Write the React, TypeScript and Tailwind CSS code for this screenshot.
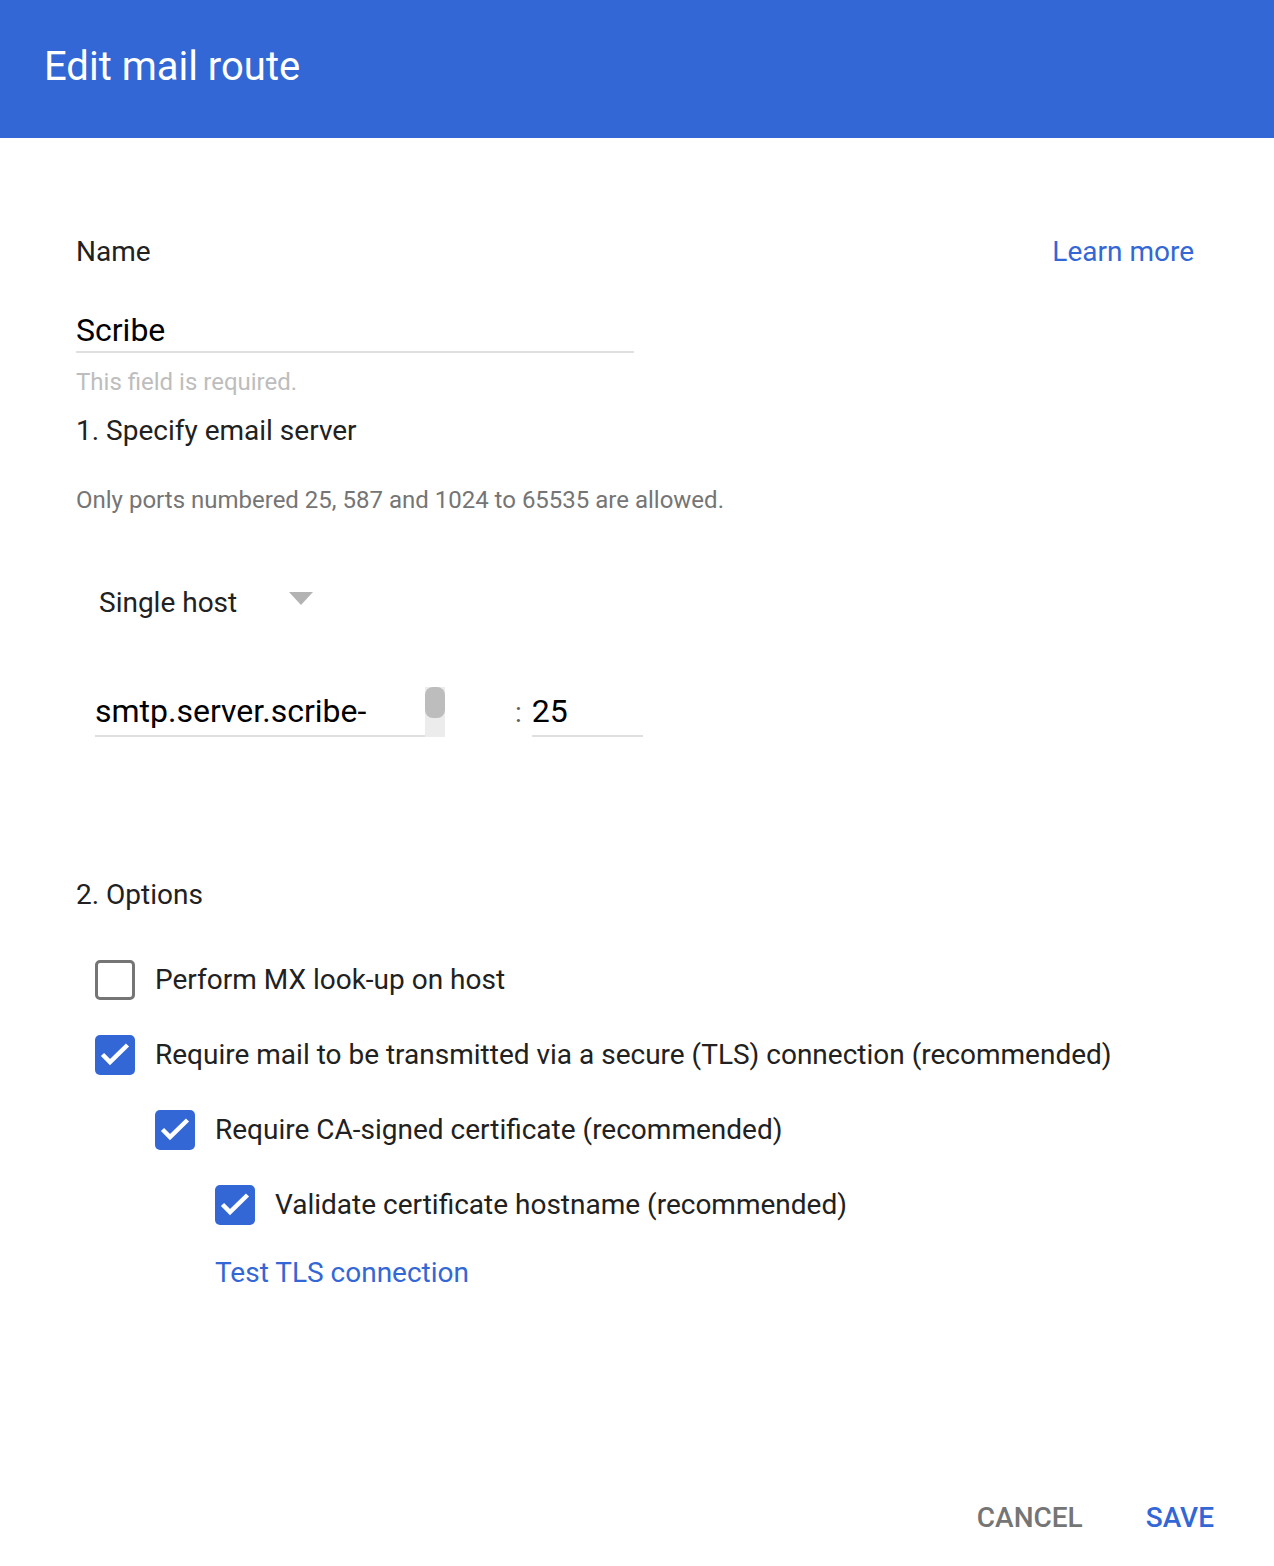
import { useState } from "react";

function Checkbox({ checked, label }: { checked: boolean; label: string }) {
    return (
        <div className="flex items-center h-[40px]">
            {checked ? (
                <div className="w-[40px] h-[40px] rounded-[5px] bg-[#3367d6] shrink-0">
                    <svg width="40" height="40" viewBox="0 0 40 40" fill="none">
                        <path d="M7.5 19.5l7.5 7.5L32.5 10" stroke="white" strokeWidth="4.5" />
                    </svg>
                </div>
            ) : (
                <div className="w-[40px] h-[40px] rounded-[5px] border-[3px] border-[#757575] shrink-0" />
            )}
            <span className="ml-[20px] text-[28px] text-[#212121]">{label}</span>
        </div>
    );
}

export default function App() {
    const [name] = useState("Scribe");

    return (
        <div className="w-[1274px] h-[1566px] bg-white font-['Roboto','Liberation_Sans',sans-serif] flex flex-col">
            <div className="h-[138px] bg-[#3367d6] flex items-center px-[44px] shrink-0">
                <h1 className="text-[40px] text-white pb-[4px]">Edit mail route</h1>
            </div>

            <div className="flex-1 flex flex-col px-[76px] pt-[97px]">
                <div className="flex justify-between items-center pr-[4px] h-[34px]">
                    <span className="text-[28px] text-[#212121]">Name</span>
                    <a className="text-[28px] text-[#3367d6]">Learn more</a>
                </div>

                <div className="w-[558px] mt-[40px] border-b-2 border-[#e0e0e0] h-[44px] flex items-center">
                    <span className="text-[32px] text-black">{name}</span>
                </div>
                <p className="text-[24px] text-[#bdbdbd] mt-[14px] leading-[30px]">This field is required.</p>
                <p className="text-[28px] text-[#212121] mt-[16px] leading-[36px]">1. Specify email server</p>
                <p className="text-[24px] text-[#757575] mt-[36px] leading-[30px]">Only ports numbered 25, 587 and 1024 to 65535 are allowed.</p>

                <div className="flex items-center mt-[68px] ml-[23px] h-[40px]">
                    <span className="text-[28px] text-[#212121]">Single host</span>
                    <svg className="ml-[52px] mb-[10px]" width="24" height="13" viewBox="0 0 24 13">
                        <path d="M0 0h24L12 13z" fill="#b3b3b3" />
                    </svg>
                </div>

                <div className="flex items-end mt-[64px] ml-[19px]">
                    <div className="w-[350px] h-[50px] border-b-2 border-[#e0e0e0] flex items-end justify-between">
                        <span className="text-[32px] text-black pb-[4px] leading-[40px]">smtp.server.scribe-</span>
                        <div className="w-[20px] h-[50px] bg-[#ececec] flex items-start mb-[-2px]">
                            <div className="w-[20px] h-[31px] rounded-[8px] bg-[#bdbdbd]" />
                        </div>
                    </div>
                    <span className="text-[28px] text-[#616161] ml-[70px] mr-[10px] pb-[4px] leading-[40px]">:</span>
                    <div className="w-[111px] h-[50px] border-b-2 border-[#e0e0e0] flex items-end">
                        <span className="text-[32px] text-black pb-[4px] leading-[40px]">25</span>
                    </div>
                </div>

                <p className="text-[28px] text-[#212121] mt-[140px] leading-[36px]">2. Options</p>

                <div className="flex flex-col gap-[35px] mt-[47px] ml-[19px]">
                    <Checkbox checked={false} label="Perform MX look-up on host" />
                    <Checkbox checked label="Require mail to be transmitted via a secure (TLS) connection (recommended)" />
                    <div className="ml-[60px]">
                        <Checkbox checked label="Require CA-signed certificate (recommended)" />
                    </div>
                    <div className="ml-[120px]">
                        <Checkbox checked label="Validate certificate hostname (recommended)" />
                    </div>
                </div>

                <a className="text-[28px] text-[#3367d6] ml-[139px] mt-[30px] leading-[36px]">Test TLS connection</a>

                <div className="flex-1" />

                <div className="flex justify-end items-center gap-[63px] mr-[-16px] pb-[27px]">
                    <button className="text-[28px] font-medium text-[#757575]">CANCEL</button>
                    <button className="text-[28px] font-medium text-[#3367d6]">SAVE</button>
                </div>
            </div>
        </div>
    );
}
